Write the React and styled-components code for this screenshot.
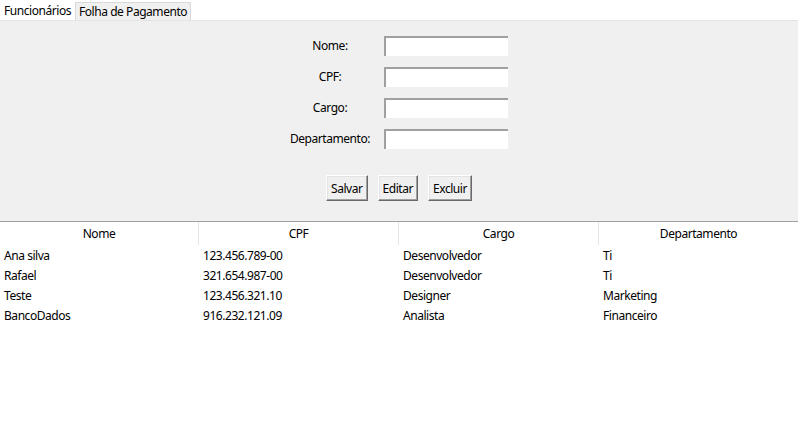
import React, { useState } from 'react';
import styled, { createGlobalStyle } from 'styled-components';

const GlobalStyle = createGlobalStyle`
  html, body {
    margin: 0;
    padding: 0;
    background: #ffffff;
  }
  body {
    font-family: "Noto Sans", "DejaVu Sans", sans-serif;
    font-size: 12px;
    letter-spacing: -0.45px;
    color: #000000;
  }
`;

const Window = styled.div`
  width: 798px;
  height: 445px;
  display: flex;
  flex-direction: column;
  background: #ffffff;
  overflow: hidden;
`;

const TabBar = styled.div`
  display: flex;
  align-items: flex-end;
  height: 20px;
  background: #ffffff;
`;

const Tab = styled.div`
  height: ${p => (p.active ? '20px' : '18px')};
  padding: 0 3px;
  display: flex;
  align-items: center;
  box-sizing: border-box;
  background: ${p => (p.active ? '#ffffff' : '#f0f0f0')};
  border: 1px solid ${p => (p.active ? '#ffffff' : '#d9d9d9')};
  border-bottom: none;
  white-space: nowrap;
  cursor: default;
`;

const Panel = styled.div`
  background: #f0f0f0;
  border-top: 1px solid #e3e3e3;
  padding: 15px 0 20px;
  display: flex;
  flex-direction: column;
  align-items: center;
`;

const Form = styled.div`
  display: grid;
  grid-template-columns: 90px 138px;
  row-gap: 11px;
  align-items: center;
`;

const Label = styled.div`
  text-align: center;
  line-height: 20px;
`;

const Entry = styled.input`
  justify-self: end;
  width: 124px;
  height: 20px;
  margin-right: 5px;
  box-sizing: border-box;
  padding: 0 2px;
  background: #ffffff;
  border: none;
  border-top: 2px solid #a0a0a0;
  border-left: 2px solid #a0a0a0;
  outline: none;
  font: inherit;
`;

const ButtonRow = styled.div`
  display: flex;
  gap: 10px;
  margin-top: 26px;
`;

const Button = styled.button`
  height: 26px;
  padding: 0 4px;
  box-sizing: border-box;
  background: #f0f0f0;
  border: 1px solid;
  border-color: #ffffff #696969 #696969 #ffffff;
  box-shadow: inset -1px -1px 0 #a0a0a0, inset 1px 1px 0 #e3e3e3;
  font: inherit;
  letter-spacing: inherit;
  color: #000000;
`;

const Tree = styled.div`
  flex: 1;
  border-top: 1px solid #a0a0a0;
  background: #ffffff;
`;

const Row = styled.div`
  display: grid;
  grid-template-columns: ${p => (p.head ? '198px 200px 200px 1fr' : '199px 200px 200px 1fr')};
  height: ${p => (p.head ? '23px' : '20px')};
  align-items: center;
`;

const HeadCell = styled.div`
  height: 23px;
  padding-top: 1px;
  line-height: 22px;
  text-align: center;
  border-left: ${p => (p.first ? 'none' : '1px solid #e5e5e5')};
  box-sizing: border-box;
`;

const Cell = styled.div`
  padding-left: 4px;
  white-space: nowrap;
`;

const fields = ['Nome:', 'CPF:', 'Cargo:', 'Departamento:'];
const columns = ['Nome', 'CPF', 'Cargo', 'Departamento'];
const rows = [
  ['Ana silva', '123.456.789-00', 'Desenvolvedor', 'Ti'],
  ['Rafael', '321.654.987-00', 'Desenvolvedor', 'Ti'],
  ['Teste', '123.456.321.10', 'Designer', 'Marketing'],
  ['BancoDados', '916.232.121.09', 'Analista', 'Financeiro'],
];

export default function App() {
  const [tab, setTab] = useState(0);
  return (
    <Window>
      <GlobalStyle />
      <TabBar>
        <Tab active={tab === 0} onClick={() => setTab(0)}>Funcionários</Tab>
        <Tab active={tab === 1} onClick={() => setTab(1)}>Folha de Pagamento</Tab>
      </TabBar>
      <Panel>
        <Form>
          {fields.map(f => (
            <React.Fragment key={f}>
              <Label>{f}</Label>
              <Entry />
            </React.Fragment>
          ))}
        </Form>
        <ButtonRow>
          <Button>Salvar</Button>
          <Button>Editar</Button>
          <Button>Excluir</Button>
        </ButtonRow>
      </Panel>
      <Tree>
        <Row head>
          {columns.map((c, i) => (
            <HeadCell key={c} first={i === 0}>{c}</HeadCell>
          ))}
        </Row>
        {rows.map(r => (
          <Row key={r[0]}>
            {r.map((v, i) => (
              <Cell key={i}>{v}</Cell>
            ))}
          </Row>
        ))}
      </Tree>
    </Window>
  );
}
